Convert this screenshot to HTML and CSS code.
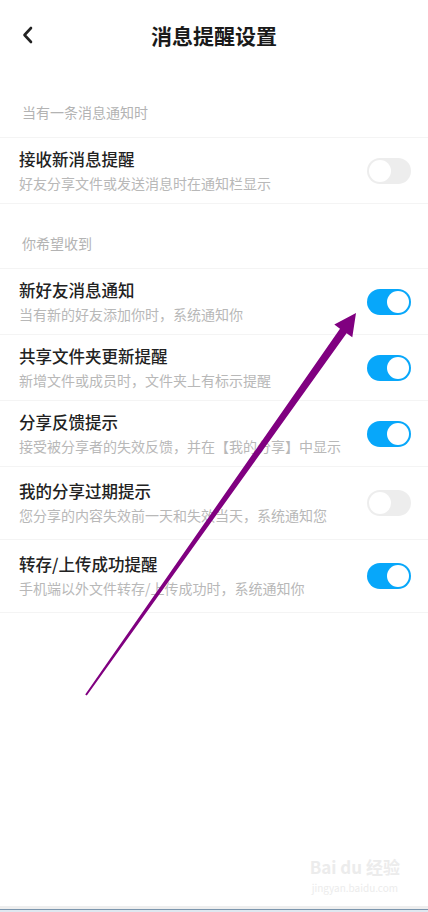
FILE: index.html
```html
<!DOCTYPE html>
<html lang="zh-CN">
  <head>
    <meta charset="UTF-8" />
    <meta name="viewport" content="width=device-width, initial-scale=1.0" />
    <title>消息提醒设置</title>
    <link rel="stylesheet" href="styles.css">
  </head>
  <body>
    <div class="page">
      <!-- Шапка -->
      <header class="topbar">
        <a href="#" class="back">
          <svg width="14" height="18" viewBox="0 0 14 18">
            <path d="M10 2 L3.5 9 L10 16" fill="none" stroke="#222" stroke-width="2.6" stroke-linecap="round" stroke-linejoin="round" />
          </svg>
        </a>
        <h1 class="title">消息提醒设置</h1>
      </header>

      <div class="section-label">当有一条消息通知时</div>
      <ul class="list">
        <li class="row">
          <div class="text">
            <div class="name">接收新消息提醒</div>
            <div class="desc">好友分享文件或发送消息时在通知栏显示</div>
          </div>
          <span class="switch"></span>
        </li>
      </ul>

      <div class="section-label">你希望收到</div>
      <ul class="list">
        <li class="row">
          <div class="text">
            <div class="name">新好友消息通知</div>
            <div class="desc">当有新的好友添加你时，系统通知你</div>
          </div>
          <span class="switch on"></span>
        </li>
        <li class="row">
          <div class="text">
            <div class="name">共享文件夹更新提醒</div>
            <div class="desc">新增文件或成员时，文件夹上有标示提醒</div>
          </div>
          <span class="switch on"></span>
        </li>
        <li class="row">
          <div class="text">
            <div class="name">分享反馈提示</div>
            <div class="desc">接受被分享者的失效反馈，并在【我的分享】中显示</div>
          </div>
          <span class="switch on"></span>
        </li>
        <li class="row wide">
          <div class="text">
            <div class="name">我的分享过期提示</div>
            <div class="desc">您分享的内容失效前一天和失效当天，系统通知您</div>
          </div>
          <span class="switch"></span>
        </li>
        <li class="row wide">
          <div class="text">
            <div class="name">转存/上传成功提醒</div>
            <div class="desc">手机端以外文件转存/上传成功时，系统通知你</div>
          </div>
          <span class="switch on"></span>
        </li>
      </ul>

      <div class="watermark">
        <div class="wm-logo">Bai du 经验</div>
        <div class="wm-url">jingyan.baidu.com</div>
      </div>
      <div class="bottom-edge"></div>

      <!-- Стрелка поверх скриншота -->
      <svg class="arrow" width="428" height="912" viewBox="0 0 428 912">
        <polygon points="85.2,694.4 340,328.7 334.3,324.6 356,313 352.3,337.3 346.6,333.3 86.8,695.6" fill="#800080" />
      </svg>
    </div>
  </body>
</html>
```

FILE: styles.css
```css
/* Общие стили */
body {
  margin: 0;
  background-color: #fff;
  font-family: "Noto Sans CJK SC", "Noto Sans", sans-serif;
}

.page {
  position: relative;
  width: 428px;
  height: 912px;
  overflow: hidden;
  display: flex;
  flex-direction: column;
}

/* Шапка */
.topbar {
  height: 73px;
  display: flex;
  align-items: flex-start;
  justify-content: center;
  position: relative;
}

.back {
  position: absolute;
  left: 21px;
  top: 26px;
  display: flex;
}

.title {
  margin: 21px 0 0;
  font-size: 21px;
  line-height: 28px;
  font-weight: 700;
  color: #1a1a1a;
}

/* Заголовки секций */
.section-label {
  padding: 29px 22px 15px;
  font-size: 14px;
  line-height: 20px;
  color: #b3b3b3;
  border-bottom: 1px solid #f4f4f4;
}

.list {
  list-style-type: none;
  margin: 0;
  padding: 0;
}

.row {
  display: flex;
  align-items: center;
  justify-content: space-between;
  padding: 10px 17px 10px 19px;
  border-bottom: 1px solid #f4f4f4;
}

.row.wide {
  padding-top: 13px;
  padding-bottom: 14px;
}

.name {
  font-size: 16.5px;
  line-height: 22px;
  font-weight: 500;
  color: #222;
}

.desc {
  margin-top: 3px;
  font-size: 14px;
  line-height: 20px;
  color: #b8b8b8;
}

/* Переключатель */
.switch {
  position: relative;
  width: 44px;
  height: 26px;
  border-radius: 13px;
  background-color: #ededed;
  flex-shrink: 0;
}

.switch::after {
  content: "";
  position: absolute;
  top: 2px;
  left: 2px;
  width: 22px;
  height: 22px;
  border-radius: 50%;
  background-color: #fff;
}

.switch.on {
  background-color: #07a7fa;
}

.switch.on::after {
  left: 20px;
}

/* Водяной знак */
.watermark {
  margin: auto 28px 12px auto;
  text-align: center;
  color: #ececec;
}

.wm-logo {
  font-size: 17px;
  line-height: 24px;
  font-weight: 700;
}

.wm-url {
  margin-top: 2px;
  font-size: 10px;
  line-height: 13px;
}

.bottom-edge {
  height: 3px;
  background-color: #eee;
  border-bottom: 1px solid #7b95ad;
  box-shadow: 0 3px 0 #dfe8f0;
  margin-bottom: 2px;
}

.arrow {
  position: absolute;
  left: 0;
  top: 0;
  pointer-events: none;
}
```
